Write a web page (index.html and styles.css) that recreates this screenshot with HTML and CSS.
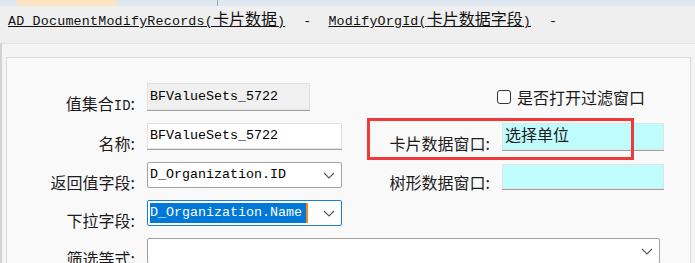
FILE: index.html
```html
<!DOCTYPE html>
<html lang="zh-CN">
<head>
    <meta charset="UTF-8">
    <title>值集合设置</title>
    <link rel="stylesheet" href="styles.css">
</head>
<body>
    <div class="topbar">
        <span class="tab"></span>
        <span class="sep"></span>
    </div>
    <div class="title"><span class="link">AD DocumentModifyRecords(<span class="cjk">卡片数据</span>)</span><span class="dash">-</span><span class="link">ModifyOrgId(<span class="cjk">卡片数据字段</span>)</span><span class="dash">-</span></div>
    <div class="main">
        <div class="panel">
            <div class="form">
                <div class="label">值集合<span class="mono">ID</span>:</div>
                <div class="field readonly">BFValueSets_5722</div>
                <div class="check-row">
                    <span class="checkbox"></span>
                    <span>是否打开过滤窗口</span>
                </div>

                <div class="label">名称:</div>
                <div class="field text">BFValueSets_5722</div>
                <div class="label">卡片数据窗口:</div>
                <div class="cyan">选择单位</div>

                <div class="label">返回值字段:</div>
                <div class="field combo">
                    <span>D_Organization.ID</span>
                    <svg class="chevron" width="12" height="7" viewBox="0 0 12 7"><polyline points="1,1 6,6 11,1"/></svg>
                </div>
                <div class="label">树形数据窗口:</div>
                <div class="cyan low"></div>

                <div class="label">下拉字段:</div>
                <div class="field combo focus">
                    <span class="selected">D_Organization.Name</span>
                    <svg class="chevron" width="12" height="7" viewBox="0 0 12 7"><polyline points="1,1 6,6 11,1"/></svg>
                </div>
                <div class="empty"></div>
                <div class="empty"></div>

                <div class="label">筛选等式:</div>
                <div class="field combo wide">
                    <span></span>
                    <svg class="chevron" width="12" height="7" viewBox="0 0 12 7"><polyline points="1,1 6,6 11,1"/></svg>
                </div>
            </div>
            <!-- annotation frame drawn over the card window row -->
            <div class="mark"></div>
        </div>
    </div>
</body>
</html>
```

FILE: styles.css
```css
body {
    margin: 0;
    height: 263px;
    overflow: hidden;
    background: #efefef;
    font-family: "Noto Sans CJK SC", "Noto Sans", sans-serif;
    color: #1b1b1b;
}
.topbar {
    display: flex;
    height: 6px;
    background: #dfe7f1;
}
.topbar .tab {
    margin-left: 17px;
    width: 100px;
    background: #fce3c2;
}
.topbar .sep {
    margin-left: 100px;
    width: 1px;
    background: #a9a9a9;
}
.title {
    height: 37px;
    box-sizing: border-box;
    padding: 2px 0 0 8px;
    font-family: "Liberation Mono", monospace;
    font-size: 13.33px;
    line-height: 20px;
    letter-spacing: 0.2px;
    white-space: nowrap;
    color: #111;
}
.title .link {
    text-decoration: underline;
}
.title .dash {
    margin: 0 17px 0 18px;
}
.cjk {
    font-family: "Noto Sans CJK SC", sans-serif;
    font-size: 16px;
    letter-spacing: 0;
}
.mono {
    font-family: "Liberation Mono", monospace;
    font-size: 14px;
}
.main {
    height: 219px;
    overflow: hidden;
    border-left: 2px solid #d2d2d2;
    border-top: 1px solid #e3e3e3;
    background: #f4f4f4;
    padding: 13px 4px 0 4px;
}
.panel {
    position: relative;
    height: 240px;
    border: 1px solid #dadada;
    background: #f9f9f9;
}
.form {
    display: grid;
    grid-template-columns: 140px 195px 160px 162px;
    grid-template-rows: 28px 27px 26px 26px 26px;
    row-gap: 12px;
    padding-top: 25px;
}
.label {
    text-align: right;
    padding: 10px 12px 0 0;
    font-size: 16px;
    line-height: 20px;
    white-space: nowrap;
}
.field {
    box-sizing: border-box;
    display: flex;
    align-items: center;
    height: 26px;
    padding-left: 2px;
    border: 1px solid #e1e1e1;
    box-shadow: 0 1px 0 #a4a4a4;
    font-family: "Liberation Mono", monospace;
    font-size: 13.33px;
    line-height: 20px;
    color: #000;
}
.field.readonly {
    width: 163px;
    height: 27px;
    background: #f0f0f0;
}
.field.text {
    background: #fff;
}
.field.combo {
    justify-content: space-between;
    padding-right: 6px;
    background: #fff;
    border: 1px solid #a2a2a2;
    border-radius: 2px;
    box-shadow: none;
}
.field.combo.focus {
    border-color: #1a7fd8;
}
.field.wide {
    grid-column: 2 / 5;
    margin-right: 4px;
}
.selected {
    background: #0078d7;
    color: #fff;
    padding-right: 4px;
    border-right: 2px solid #f08a24;
}
.chevron polyline {
    fill: none;
    stroke: #5a5a5a;
    stroke-width: 1.2;
}
.cyan {
    box-sizing: border-box;
    height: 27px;
    padding: 0 2px;
    background: #bffcfd;
    border: 1px solid #e4e4e4;
    box-shadow: 0 1px 0 #a0a0a0;
    font-size: 16px;
    line-height: 20px;
}
.cyan.low {
    height: 25px;
    margin-top: 2px;
}
.check-row {
    grid-column: 4;
    margin-left: -5px;
    display: flex;
    align-items: center;
    gap: 6px;
    font-size: 16px;
    line-height: 20px;
    white-space: nowrap;
}
.checkbox {
    width: 14px;
    height: 14px;
    box-sizing: border-box;
    border: 1px solid #333;
    border-radius: 3px;
    background: #fff;
}
.mark {
    position: absolute;
    left: 360px;
    top: 60px;
    width: 267px;
    height: 42px;
    box-sizing: border-box;
    border: 3px solid #ee3a3a;
}
```
